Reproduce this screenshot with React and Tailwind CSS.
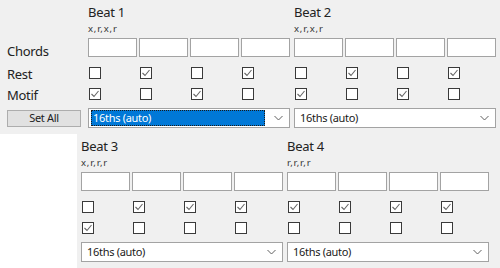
import React from "react";

const font = { fontFamily: '"Noto Sans", "Open Sans", sans-serif' };

function Check({ on }) {
  return (
    <div className="w-[12px] h-[12px] border border-[#3a3a3a] bg-white flex items-center justify-center">
      {on ? (
        <svg width="10" height="10" viewBox="0 0 10 10">
          <path d="M1.5 5 L4 7.5 L8.5 2" fill="none" stroke="#666666" strokeWidth="1.1" />
        </svg>
      ) : null}
    </div>
  );
}

function Chevron() {
  return (
    <svg width="9" height="6" viewBox="0 0 9 6">
      <path d="M0.5 1 L4.5 5 L8.5 1" fill="none" stroke="#606060" strokeWidth="1" />
    </svg>
  );
}

function Group({ title, sub, rest, motif, selected }) {
  return (
    <div className="w-[202px] flex flex-col shrink-0">
      <div className="h-[38px] pt-[4px]">
        <div className="text-[13px] leading-[17px] text-[#222] tracking-[-0.3px]">{title}</div>
        <div className="text-[9.5px] leading-[12px] text-[#333] mt-[2px] tracking-[0.8px]">{sub}</div>
      </div>
      <div className="h-[19px] flex gap-[2px]">
        {[0, 1, 2, 3].map((i) => (
          <div key={i} className="w-[49px] h-[19px] border border-[#a3a3a3] bg-white" />
        ))}
      </div>
      <div className="h-[10px]" />
      <div className="h-[12px] flex gap-[2px]">
        {rest.map((v, i) => (
          <div key={i} className="w-[49px] pl-[1px]">
            <Check on={v} />
          </div>
        ))}
      </div>
      <div className="h-[9px]" />
      <div className="h-[12px] flex gap-[2px]">
        {motif.map((v, i) => (
          <div key={i} className="w-[49px] pl-[1px]">
            <Check on={v} />
          </div>
        ))}
      </div>
      <div className="h-[8px]" />
      <div className="h-[20px] border border-[#a3a3a3] bg-white flex items-center pl-[2px] pr-[6px]">
        {selected ? (
          <div className="flex-1 h-[16px] bg-[#0078d7] border border-dotted border-[#1a1a1a] flex items-center pl-[1px] text-[11px] tracking-[-0.3px] text-white mr-[9px]">
            16ths (auto)
          </div>
        ) : (
          <div className="flex-1 text-[11px] tracking-[-0.3px] text-[#1a1a1a] pl-[3px]">16ths (auto)</div>
        )}
        <Chevron />
      </div>
    </div>
  );
}

export default function App() {
  return (
    <div className="w-[500px] h-[268px] bg-white overflow-hidden" style={font}>
      <div className="h-[134px] bg-[#f0f0f0] flex">
        <div className="w-[88px] shrink-0 flex flex-col text-[13px] text-[#222] tracking-[-0.3px]">
          <div className="h-[38px]" />
          <div className="h-[19px] pl-[7px] pt-[5px] leading-[17px]">Chords</div>
          <div className="h-[10px]" />
          <div className="h-[12px] pl-[7px] leading-[14px]">Rest</div>
          <div className="h-[9px]" />
          <div className="h-[12px] pl-[7px] leading-[14px]">Motif</div>
          <div className="h-[10px]" />
          <div className="ml-[7px] w-[74px] h-[17px] bg-[#e1e1e1] border border-[#adadad] flex items-center justify-center text-[11px]">
            Set All
          </div>
        </div>
        <div className="flex gap-[4px]">
          <Group title="Beat 1" sub="x,r,x,r" rest={[0, 1, 0, 1]} motif={[1, 0, 1, 0]} selected />
          <Group title="Beat 2" sub="x,r,x,r" rest={[0, 1, 0, 1]} motif={[1, 0, 1, 0]} />
        </div>
      </div>
      <div className="h-[134px] flex">
        <div className="w-[77px] shrink-0 bg-white" />
        <div className="flex-1 bg-[#f0f0f0] pl-[4px] flex gap-[4px]">
          <Group title="Beat 3" sub="x,r,r,r" rest={[0, 1, 1, 1]} motif={[1, 0, 0, 0]} />
          <Group title="Beat 4" sub="r,r,r,r" rest={[1, 1, 1, 1]} motif={[0, 0, 0, 0]} />
        </div>
      </div>
    </div>
  );
}
